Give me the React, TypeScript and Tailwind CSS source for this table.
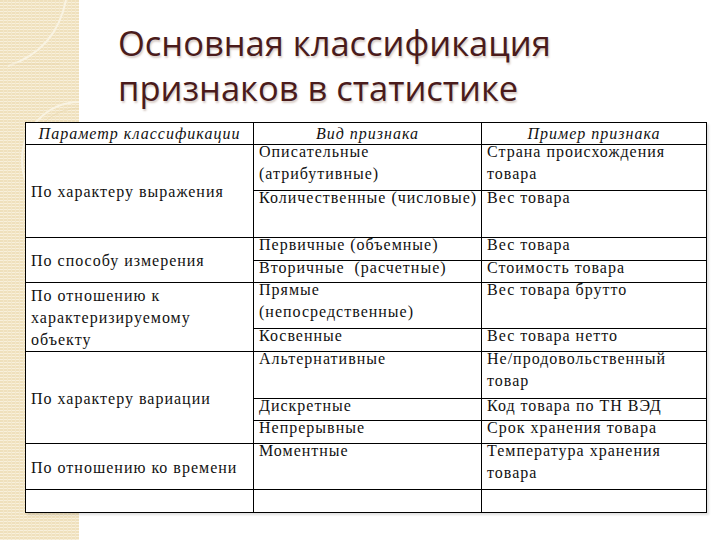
import React from 'react'

// one entry per grid cell: column, first row, row span, text lines
type Cell = { col: number; row: number; span: number; lines: string[]; middle?: boolean }

const cells: Cell[] = [
  { col: 1, row: 2, span: 2, lines: ['По характеру выражения'], middle: true },
  { col: 2, row: 2, span: 1, lines: ['Описательные', '(атрибутивные)'] },
  { col: 3, row: 2, span: 1, lines: ['Страна происхождения', 'товара'] },
  { col: 2, row: 3, span: 1, lines: ['Количественные (числовые)'] },
  { col: 3, row: 3, span: 1, lines: ['Вес товара'] },

  { col: 1, row: 4, span: 2, lines: ['По способу измерения'], middle: true },
  { col: 2, row: 4, span: 1, lines: ['Первичные (объемные)'] },
  { col: 3, row: 4, span: 1, lines: ['Вес товара'] },
  { col: 2, row: 5, span: 1, lines: ['Вторичные  (расчетные)'] },
  { col: 3, row: 5, span: 1, lines: ['Стоимость товара'] },

  { col: 1, row: 6, span: 2, lines: ['По отношению к', 'характеризируемому', 'объекту'], middle: true },
  { col: 2, row: 6, span: 1, lines: ['Прямые', '(непосредственные)'] },
  { col: 3, row: 6, span: 1, lines: ['Вес товара брутто'] },
  { col: 2, row: 7, span: 1, lines: ['Косвенные'] },
  { col: 3, row: 7, span: 1, lines: ['Вес товара нетто'] },

  { col: 1, row: 8, span: 3, lines: ['По характеру вариации'], middle: true },
  { col: 2, row: 8, span: 1, lines: ['Альтернативные'] },
  { col: 3, row: 8, span: 1, lines: ['Не/продовольственный', 'товар'] },
  { col: 2, row: 9, span: 1, lines: ['Дискретные'] },
  { col: 3, row: 9, span: 1, lines: ['Код товара по ТН ВЭД'] },
  { col: 2, row: 10, span: 1, lines: ['Непрерывные'] },
  { col: 3, row: 10, span: 1, lines: ['Срок хранения товара'] },

  { col: 1, row: 11, span: 1, lines: ['По отношению ко времени'], middle: true },
  { col: 2, row: 11, span: 1, lines: ['Моментные'] },
  { col: 3, row: 11, span: 1, lines: ['Температура хранения', 'товара'] },

  { col: 1, row: 12, span: 1, lines: [] },
  { col: 2, row: 12, span: 1, lines: [] },
  { col: 3, row: 12, span: 1, lines: [] },
]

function SideStrip() {
  return (
    <svg width="79" height="540" viewBox="0 0 79 540" className="block">
      <defs>
        <pattern id="lines" width="4" height="3" patternUnits="userSpaceOnUse">
          <rect width="4" height="3" fill="#efe0bc" />
          <rect y="2" width="4" height="1" fill="#f8f0dc" />
          <rect x="3" width="1" height="3" fill="#f3e7c9" />
        </pattern>
      </defs>
      <rect width="79" height="540" fill="url(#lines)" />
      <path d="M66 0 Q 56 50 8 66" fill="none" stroke="#f9f3e2" strokeWidth="2" />
      <path d="M0 64 H 60" fill="none" stroke="#e6d3a8" strokeWidth="1" opacity="0.6" />
      <circle cx="80" cy="160" r="58" fill="none" stroke="#f9f3e2" strokeWidth="2" />
      <circle cx="80" cy="160" r="52" fill="none" stroke="#e8d7ae" strokeWidth="1" opacity="0.6" />
    </svg>
  )
}

export default function App() {
  return (
    <div className="relative w-[720px] h-[540px] bg-white overflow-hidden">
      <div className="absolute left-0 top-0">
        <SideStrip />
      </div>

      <div className="relative flex flex-col">
        <h1 className="pl-[118px] pt-[20px] text-[34.5px] leading-[45px] text-[#4a1b1b] font-normal font-['Open_Sans'] [text-shadow:1px_2px_2px_rgba(120,80,60,0.3)]">
          <div>Основная классификация</div>
          <div>признаков в статистике</div>
        </h1>

        <div className="ml-[25px] mt-[12px] w-[682px] shadow-[2px_2px_2px_rgba(0,0,0,0.12)]">
          <div className="grid grid-cols-[227px_227px_224px] grid-rows-[21px_45px_46px_22px_21px_45px_22px_46px_21px_22px_45px_22px] gap-px bg-black p-px font-['Liberation_Serif'] text-[16px] leading-[22px] tracking-[1px] text-[#111]">
            <div className="col-start-1 row-start-1 bg-white flex items-center justify-center italic">Параметр классификации</div>
            <div className="col-start-2 row-start-1 bg-white flex items-center justify-center italic">Вид признака</div>
            <div className="col-start-3 row-start-1 bg-white flex items-center justify-center italic">Пример признака</div>

            {cells.map((c, i) => (
              <div
                key={i}
                className={`bg-white pl-[5px] whitespace-pre flex flex-col ${c.middle ? 'justify-center pt-[2px]' : 'justify-start'}`}
                style={{ gridColumn: c.col, gridRow: `${c.row} / span ${c.span}` }}
              >
                {c.lines.map((l, j) => (
                  <div key={j} className={c.middle ? '' : 'h-[22px] leading-[14px]'}>
                    {l}
                  </div>
                ))}
              </div>
            ))}
          </div>
        </div>
      </div>
    </div>
  )
}
